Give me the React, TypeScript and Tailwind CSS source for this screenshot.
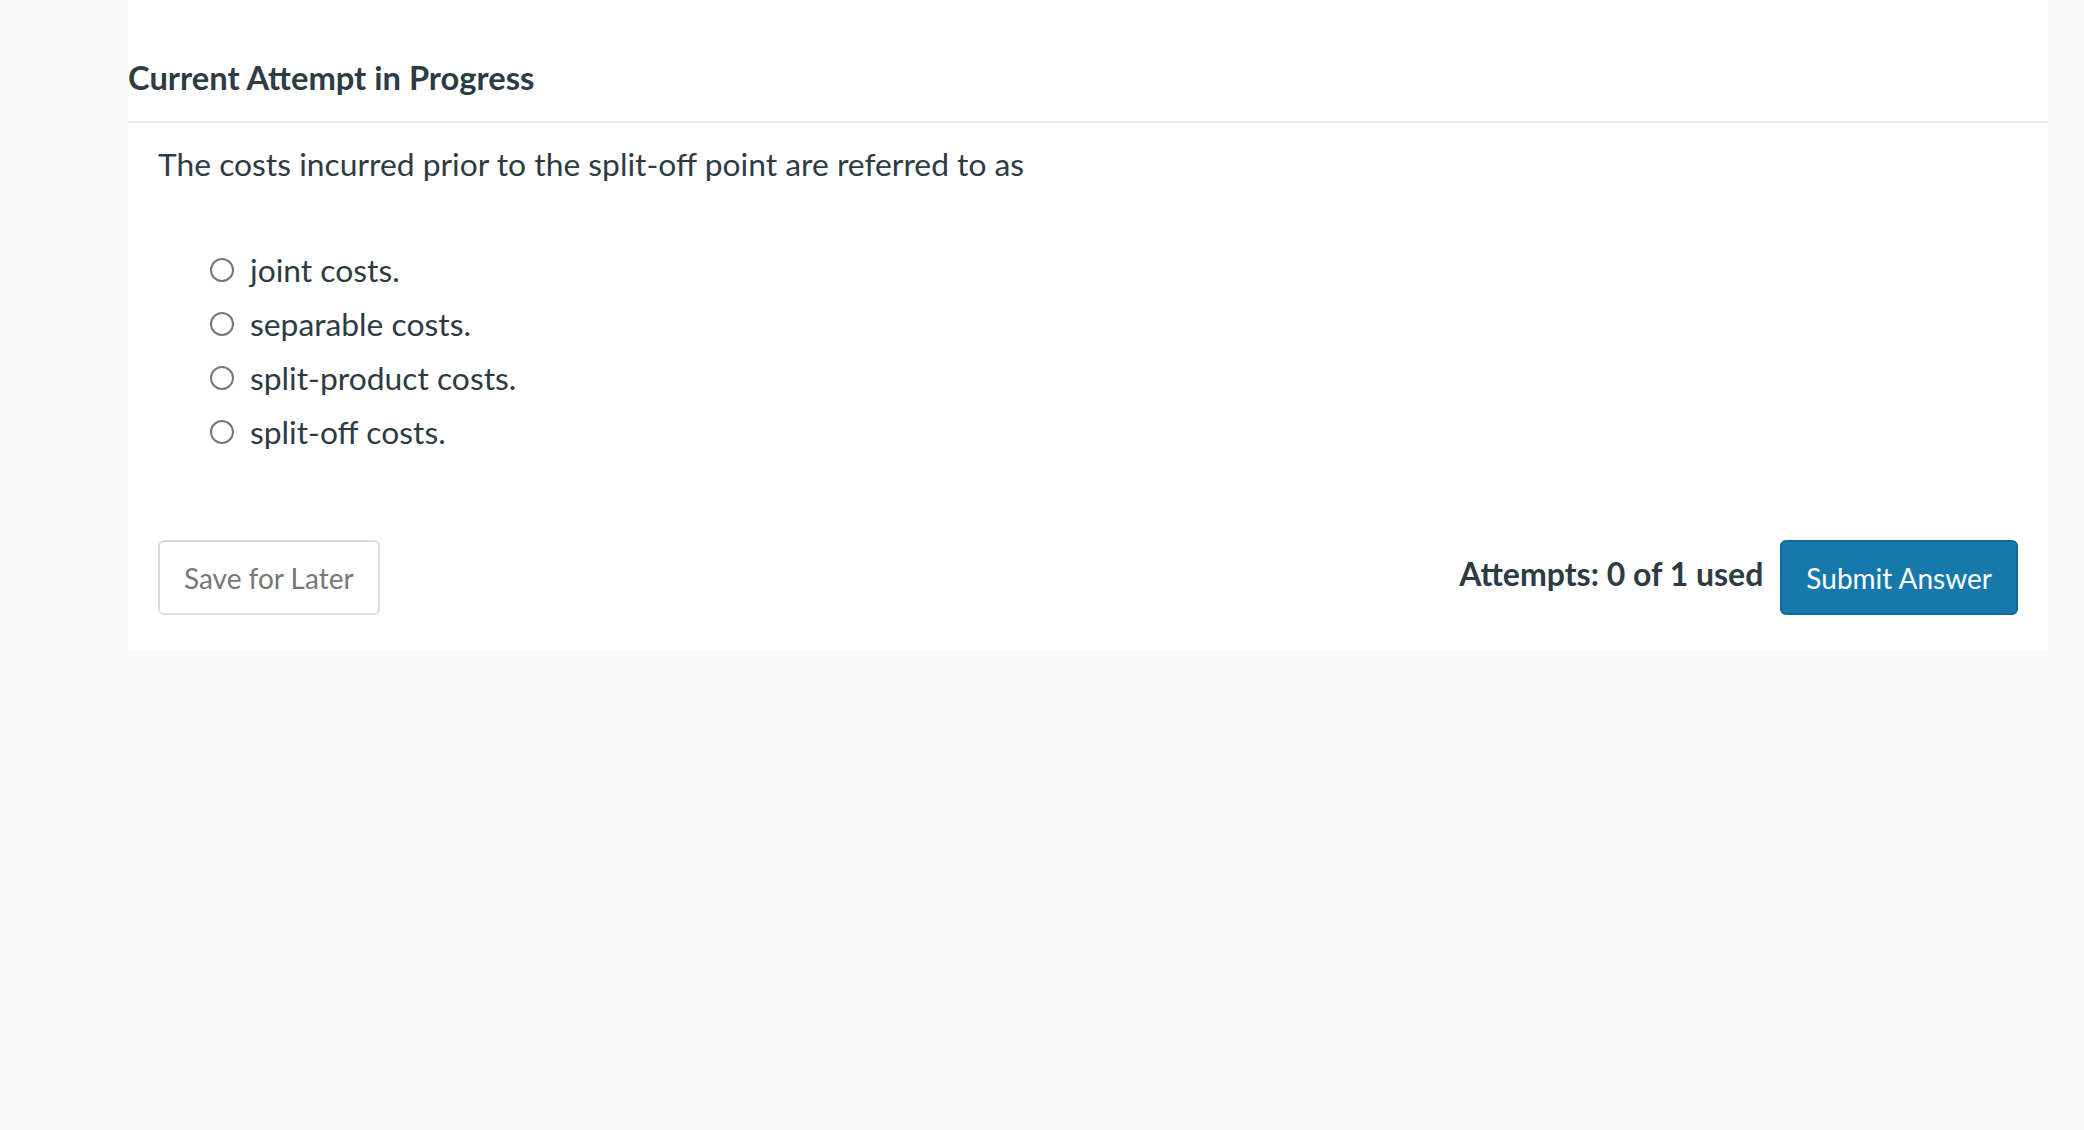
import React from 'react';

const options = ['joint costs.', 'separable costs.', 'split-product costs.', 'split-off costs.'];

const App: React.FC = () => {
  return (
    <div
      className="min-h-[1130px] bg-[#f9f9f9] pl-[128px] pr-[36px] text-[#2d3b45]"
      style={{ fontFamily: 'Lato, "Open Sans", sans-serif' }}
    >
      <div className="bg-white">
        <div className="border-b-2 border-[#ebebeb] pt-[60px] pb-[25px]">
          <h2 className="text-[32.7px] leading-[36px] font-bold">Current Attempt in Progress</h2>
        </div>
        <div className="px-[30px] pt-[21px] pb-[36px]">
          <p className="text-[31.8px] leading-[40px]">
            The costs incurred prior to the split-off point are referred to as
          </p>
          <ul className="mt-[59px] pl-[52px]">
            {options.map((opt) => (
              <li key={opt} className="flex h-[54px] items-center">
                <span className="h-[24px] w-[24px] rounded-full border-2 border-[#777777] bg-white" />
                <span className="ml-[16px] text-[31.8px] leading-[40px]">{opt}</span>
              </li>
            ))}
          </ul>
          <div className="mt-[81px] flex items-center justify-between">
            <button className="h-[75px] rounded-[6px] border-2 border-[#dddddd] bg-white px-[24px] text-[28px] text-[#777777]">
              Save for Later
            </button>
            <div className="flex items-center">
              <span className="pb-[7px] text-[32px] font-bold">Attempts: 0 of 1 used</span>
              <button className="ml-[17px] h-[75px] rounded-[6px] border-2 border-[#0f6a99] bg-[#1779ab] px-[24px] text-[28px] text-white">
                Submit Answer
              </button>
            </div>
          </div>
        </div>
      </div>
    </div>
  );
};

export default App;
